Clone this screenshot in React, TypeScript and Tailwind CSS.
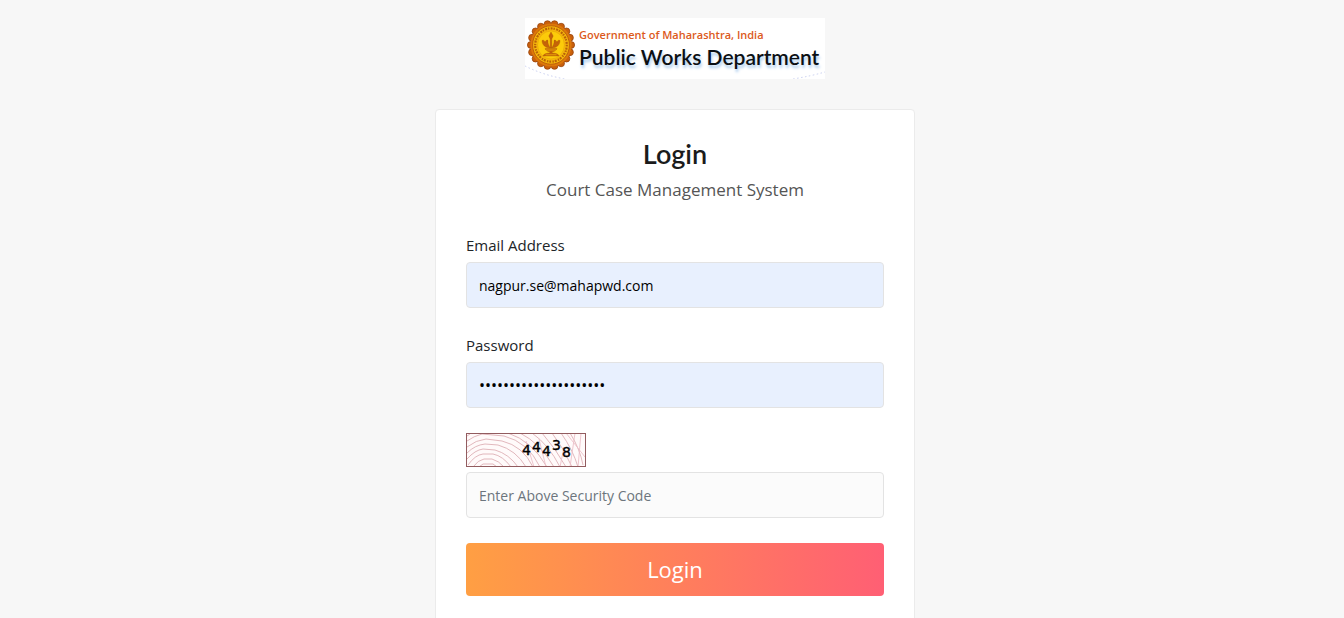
import { useState } from 'react'

const scallops = Array.from({ length: 18 }, (_, i) => {
  const a = (i * Math.PI * 2) / 18
  return { x: 24 + Math.cos(a) * 20.2, y: 25 + Math.sin(a) * 21.2 }
})

const captchaDigits = [
  { value: '4', x: 56, y: 22 },
  { value: '4', x: 66, y: 19 },
  { value: '4', x: 76, y: 23 },
  { value: '3', x: 86, y: 17 },
  { value: '8', x: 96, y: 24 },
]

function Seal() {
  return (
    <svg width="48" height="52" viewBox="0 0 48 52" aria-hidden="true" className="shrink-0">
      <g fill="#c9600c" stroke="#8f3d08" strokeWidth="0.7">
        {scallops.map((s, i) => (
          <circle key={i} cx={s.x} cy={s.y} r="3.4" />
        ))}
      </g>
      <ellipse cx="24" cy="25" rx="20.6" ry="21.6" fill="#dd780a" />
      <ellipse cx="24" cy="25" rx="18.4" ry="19.2" fill="#f5b60c" stroke="#b4560a" strokeWidth="0.8" />
      <ellipse cx="24" cy="25" rx="15.8" ry="16.6" fill="none" stroke="#b86208" strokeWidth="2.2" strokeDasharray="1.4 1.3 2 0.9" />
      <ellipse cx="24" cy="25" rx="13.4" ry="14" fill="#fccb0a" stroke="#e09a0a" strokeWidth="0.5" />
      {/* lamp with leaves */}
      <g fill="#c56408" stroke="#a04c06" strokeWidth="0.3">
        <path d="M24 12 L26.2 16 L24.8 19 V28 H23.2 V19 L21.8 16 Z" />
        <path d="M23.2 28 C18.5 28 15 25 15 20.5 C16.5 19.5 18 21 18 22.5 C18.6 20.5 20 19.5 21 20.5 C20.5 23.5 22 25.5 23.2 28 Z" />
        <path d="M24.8 28 C29.5 28 33 25 33 20.5 C31.5 19.5 30 21 30 22.5 C29.4 20.5 28 19.5 27 20.5 C27.5 23.5 26 25.5 24.8 28 Z" />
        <path d="M18 28.5 H30 C29.5 30.5 27.5 31.5 25.2 31.8 V33 C29 33.2 31.5 34 32 36 H16 C16.5 34 19 33.2 22.8 33 V31.8 C20.5 31.5 18.5 30.5 18 28.5 Z" />
      </g>
      <path d="M19 30 H29 M18.5 34.8 H29.5" stroke="#fccb0a" strokeWidth="0.6" />
    </svg>
  )
}

function Logo() {
  return (
    <div className="relative flex h-[61px] w-[300px] shrink-0 bg-white pt-[2px] pl-[2px]">
      <svg width="300" height="61" viewBox="0 0 300 61" aria-hidden="true" className="absolute inset-0">
        <path d="M0 48 Q18 57 40 61 M268 61 Q286 58 300 54" fill="none" stroke="#c9cff0" strokeDasharray="1.5 2.5" />
      </svg>
      <Seal />
      <div className="relative ml-1 pt-[7px] whitespace-nowrap">
        <p className="font-['Open_Sans',sans-serif] text-[11px] leading-4 font-semibold text-[#dc5a1c]">
          Government of Maharashtra, India
        </p>
        <p className="font-['Lato',sans-serif] text-[21px] leading-7 font-semibold text-[#0c1014] [text-shadow:1px_3px_3px_#a9cbec]">
          Public Works Department
        </p>
      </div>
    </div>
  )
}

function Captcha() {
  return (
    <svg width="120" height="34" viewBox="0 0 120 34" role="img" aria-label="Security code" className="block">
      <rect width="120" height="34" fill="#fffafa" />
      <g fill="none" stroke="#deb0b6" strokeWidth="0.9">
        <path d="M13 34 L17 31 H27 L31 34 M7 34 Q12 27 18 26 H26 Q33 28 38 34 M2 32 Q9 22 17 21 H27 Q37 23 45 34" />
        <path d="M1 26 Q9 17 17 16 L29 17 Q43 21 52 34 M1 20 Q9 12 19 11 L32 12 Q50 17 60 34 M1 14 Q10 7 20 6 L36 8 Q57 13 67 34" />
        <path d="M1 8 Q8 3 16 1 L38 3 Q62 9 74 34 M1 3 L4 1 M42 0 Q66 8 81 34 M54 0 Q74 10 88 34" />
        <path d="M66 0 Q83 12 94 34 M76 0 Q90 16 100 34 M86 0 Q99 17 106 34 M95 0 Q107 17 112 34 M104 0 Q114 16 117 32" />
        <path d="M100 0 L119 24 M68 34 L60 8 M80 34 L73 6 M94 34 L98 14 M104 34 L109 0 M112 34 L115 0" stroke="#ecc0c8" />
      </g>
      <g fill="#000000" stroke="#000000" strokeWidth="0.4" fontFamily="'DejaVu Sans', sans-serif" fontSize="14">
        {captchaDigits.map(d => (
          <text key={d.x} x={d.x} y={d.y}>{d.value}</text>
        ))}
      </g>
      <rect x="0.5" y="0.5" width="119" height="33" fill="none" stroke="#925c5f" />
    </svg>
  )
}

export default function App() {
  const [email, setEmail] = useState('nagpur.se@mahapwd.com')
  const [password, setPassword] = useState('courtcase-management1')
  const [code, setCode] = useState('')

  return (
    <main className="flex h-screen flex-col items-center overflow-hidden bg-[#f7f7f7] pt-[18px] pl-[6px] font-['Open_Sans','Noto_Sans',sans-serif] text-[#212529]">
      <Logo />

      <section className="mt-[30px] w-full max-w-[480px] shrink-0 rounded border border-[#ebebeb] bg-white px-[30px] pt-7 pb-12">
        <h1 className="text-center font-['Lato',sans-serif] text-[27px] leading-8 font-semibold text-[#1b1b1b]">Login</h1>
        <p className="mt-2 text-center text-[17px] leading-6 text-[#555555]">Court Case Management System</p>

        <form className="mt-[31px]" onSubmit={e => e.preventDefault()}>
          <div className="mb-[25px]">
            <label htmlFor="email" className="mb-[5px] block text-[15px] leading-6">Email Address</label>
            <input
              id="email"
              type="email"
              value={email}
              onChange={e => setEmail(e.target.value)}
              className="block h-[46px] w-full rounded border border-[#e3e3e3] bg-[#e8f0fe] px-3 text-[14px] text-black outline-none"
            />
          </div>

          <div className="mb-[25px]">
            <label htmlFor="password" className="mb-[5px] block text-[15px] leading-6">Password</label>
            <input
              id="password"
              type="password"
              value={password}
              onChange={e => setPassword(e.target.value)}
              className="block h-[46px] w-full rounded border border-[#e3e3e3] bg-[#e8f0fe] px-3 text-[16px] text-black outline-none"
            />
          </div>

          <div className="mb-[25px]">
            <Captcha />
            <input
              type="text"
              aria-label="Security code"
              placeholder="Enter Above Security Code"
              value={code}
              onChange={e => setCode(e.target.value)}
              className="mt-[5px] block h-[46px] w-full rounded border border-[#e3e3e3] bg-[#fbfbfb] px-3 text-[14px] outline-none placeholder:text-[#6c757d]"
            />
          </div>

          <button
            type="submit"
            className="h-[53px] w-full rounded bg-linear-to-r/srgb from-[#ff9f43] to-[#ff5f74] text-[22px] text-white"
          >
            Login
          </button>
        </form>
      </section>
    </main>
  )
}
